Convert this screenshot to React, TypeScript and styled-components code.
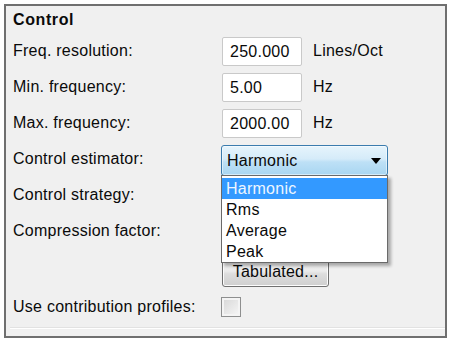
import React from 'react';
import styled, { createGlobalStyle } from 'styled-components';

const GlobalStyle = createGlobalStyle`
  html, body {
    margin: 0;
    padding: 0;
    background: #ffffff;
  }
  body {
    font-family: "Liberation Sans", Arial, sans-serif;
    font-size: 16px;
    letter-spacing: 0.25px;
    color: #0a0a0a;
  }
`;

const Page = styled.div`
  width: 453px;
  height: 350px;
  padding: 4px 0 0 4px;
  box-sizing: border-box;
`;

const GroupBox = styled.div`
  width: 443px;
  height: 334px;
  box-sizing: border-box;
  border: 2px solid #6f6f6f;
  background: #f0f0f0;
  display: flex;
  flex-direction: column;
`;

const Title = styled.div`
  height: 27px;
  padding: 5px 0 0 7px;
  box-sizing: border-box;
  font-weight: bold;
  letter-spacing: 0.6px;
  line-height: 18px;
`;

const Form = styled.div`
  display: grid;
  grid-template-columns: 209px auto;
  grid-template-rows: 36px 36px 36px 36px 36px 36px 40px 36px;
  padding-left: 7px;
  align-items: center;
`;

const Label = styled.div`
  line-height: 18px;
`;

const Field = styled.div`
  display: flex;
  align-items: center;
  gap: 11px;
`;

const Input = styled.div`
  width: 80px;
  height: 29px;
  box-sizing: border-box;
  border: 1px solid #c9c9c9;
  border-radius: 2px;
  background: #fff;
  padding-left: 7px;
  line-height: 27px;
`;

const Unit = styled.span``;

const Combo = styled.div`
  position: relative;
  width: 167px;
  height: 31px;
  box-sizing: border-box;
  margin: 3px 0 0 -1px;
  border: 1px solid #3b7cae;
  border-radius: 3px;
  background: linear-gradient(#e6f4fc 0%, #d5ebf9 45%, #bde0f6 55%, #a9d6f1 100%);
  display: flex;
  align-items: center;
  justify-content: space-between;
  padding: 0 6px 0 5px;
  box-shadow: inset 0 0 0 1px rgba(255, 255, 255, 0.5);
`;

const Arrow = styled.svg`
  width: 10px;
  height: 6px;
`;

const List = styled.div`
  position: absolute;
  top: 100%;
  left: -1px;
  width: 167px;
  box-sizing: border-box;
  border: 1px solid #6a6a6a;
  background: #fff;
  padding-top: 2px;
  box-shadow: 3px 3px 3px rgba(0, 0, 0, 0.3);
  z-index: 2;
`;

const Item = styled.div<{ $active?: boolean }>`
  height: 21px;
  line-height: 21px;
  padding-left: 4px;
  background: ${p => (p.$active ? '#3399ff' : 'transparent')};
  color: ${p => (p.$active ? '#eef6ff' : '#0a0a0a')};
`;

const Button = styled.div`
  width: 107px;
  height: 29px;
  box-sizing: border-box;
  margin-top: 6px;
  border: 1px solid #707070;
  border-radius: 3px;
  background: linear-gradient(#f3f3f3 0%, #ebebeb 45%, #dddddd 55%, #cfcfcf 100%);
  box-shadow: inset 0 0 0 1px #fcfcfc;
  text-align: center;
  line-height: 26px;
`;

const CheckBox = styled.div`
  width: 20px;
  height: 20px;
  box-sizing: border-box;
  margin-left: -1px;
  border: 1px solid #8e8f8f;
  background: linear-gradient(135deg, #d6d6d6, #f7f7f7);
  box-shadow: inset 0 0 0 2px #f4f4f4;
`;

const Divider = styled.div`
  margin: 2px 0 0 4px;
  height: 1px;
  border-top: 1px solid #e2e2e2;
  background: #ffffff;
`;

const estimators = ['Harmonic', 'Rms', 'Average', 'Peak'];

const App: React.FC = () => {
  return (
    <Page>
      <GlobalStyle />
      <GroupBox>
        <Title>Control</Title>
        <Form>
          <Label>Freq. resolution:</Label>
          <Field>
            <Input>250.000</Input>
            <Unit>Lines/Oct</Unit>
          </Field>
          <Label>Min. frequency:</Label>
          <Field>
            <Input>5.00</Input>
            <Unit>Hz</Unit>
          </Field>
          <Label>Max. frequency:</Label>
          <Field>
            <Input>2000.00</Input>
            <Unit>Hz</Unit>
          </Field>
          <Label>Control estimator:</Label>
          <Field>
            <Combo>
              <span>Harmonic</span>
              <Arrow viewBox="0 0 10 6">
                <path d="M0 0 H10 L5 6 Z" fill="#000" />
              </Arrow>
              <List>
                {estimators.map((e, i) => (
                  <Item key={e} $active={i === 0}>{e}</Item>
                ))}
              </List>
            </Combo>
          </Field>
          <Label>Control strategy:</Label>
          <Field />
          <Label>Compression factor:</Label>
          <Field />
          <Label />
          <Field>
            <Button>Tabulated...</Button>
          </Field>
          <Label>Use contribution profiles:</Label>
          <Field>
            <CheckBox />
          </Field>
        </Form>
        <Divider />
      </GroupBox>
    </Page>
  );
};

export default App;
